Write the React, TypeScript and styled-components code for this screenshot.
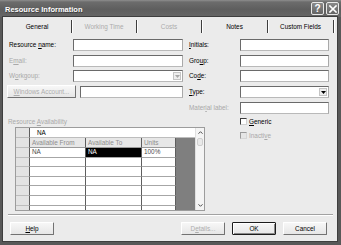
import React from "react";
import styled, { createGlobalStyle, css } from "styled-components";

const UI_FONT = `"Liberation Sans", Arial, sans-serif`;

const GlobalStyle = createGlobalStyle`
  html, body { margin: 0; padding: 0; background: #ffffff; }
  body { font-family: ${UI_FONT}; }
  * { box-sizing: border-box; }
`;

const Window = styled.div`
  width: 341px;
  height: 245px;
  background: #585858;
  display: flex;
  flex-direction: column;
  font-family: ${UI_FONT};
  font-size: 6.4px;
  color: #000;
  overflow: hidden;
`;

const TitleBar = styled.div`
  height: 17px;
  flex: none;
  display: flex;
  align-items: flex-start;
  gap: 2px;
  padding: 0 2px 0 5px;
  background: linear-gradient(#8e8e8e 0, #6c6c6c 2px, #5e5e5e 55%, #666666 100%);
`;

const Title = styled.div`
  flex: 1;
  padding-top: 5px;
  line-height: 9px;
  color: #fff;
  font-weight: bold;
  font-size: 7.5px;
  white-space: nowrap;
  text-shadow: 0.5px 0.5px 0 #3c3c3c;
`;

const TitleButton = styled.div`
  width: 13px;
  height: 13px;
  margin-top: 2px;
  border: 1px solid #e8e8e8;
  border-radius: 2px;
  background: linear-gradient(#8a8a8a, #646464);
  display: flex;
  align-items: center;
  justify-content: center;
  color: #fff;
  font-weight: bold;
  font-size: 10px;
  line-height: 11px;
`;

const Client = styled.div`
  flex: 1;
  margin: 0 4px 4px 3px;
  background: #ebebeb;
  display: flex;
  flex-direction: column;
  box-shadow: 0 0 0 1px #3e3e3e;
`;

const TabStrip = styled.div`
  height: 17px;
  flex: none;
  display: flex;
`;

const Tab = styled.div<{ $w: number; $disabled?: boolean }>`
  width: ${(p) => p.$w}px;
  height: 13px;
  margin-top: 3px;
  flex: none;
  display: flex;
  align-items: center;
  justify-content: center;
  border-right: 1px solid #3e3e3e;
  box-shadow: 1px 0 0 #ffffff;
  white-space: nowrap;
  color: ${(p) => (p.$disabled ? "#acacac" : "#000")};
`;

const TopSection = styled.div`
  display: flex;
  align-items: flex-start;
  margin-top: 5px;
  padding-left: 4px;
`;

const LeftFields = styled.div`
  width: 176px;
  display: grid;
  grid-template-columns: 66px 110px;
  grid-auto-rows: 12px;
  row-gap: 3.7px;
`;

const RightFields = styled.div`
  width: 140px;
  margin-left: 6px;
  display: grid;
  grid-template-columns: 51px 89px;
  grid-auto-rows: 12px;
  row-gap: 3.7px;
`;

const FieldLabel = styled.div<{ $disabled?: boolean; $indent?: number }>`
  line-height: 12px;
  white-space: nowrap;
  padding-left: ${(p) => p.$indent ?? 0}px;
  color: ${(p) => (p.$disabled ? "#a9a9a9" : "#000")};
`;

const Key = styled.span`
  text-decoration: underline;
  text-underline-offset: 1px;
`;

const TextBox = styled.div<{ $grow?: boolean }>`
  height: 12px;
  background: #fff;
  border: 1px solid;
  border-color: #6a6a6a #a9a9a9 #b9b9b9 #6a6a6a;
  display: flex;
  justify-content: flex-end;
  align-items: stretch;
  ${(p) => p.$grow && css`flex: 1;`}
`;

const DropButton = styled.div<{ $disabled?: boolean }>`
  width: 8px;
  margin: 1px;
  background: #eeeeee;
  border: 1px solid #c4c4c4;
  display: flex;
  align-items: center;
  justify-content: center;
  color: ${(p) => (p.$disabled ? "#a8a8a8" : "#000")};
`;

const AccountRow = styled.div`
  grid-column: 1 / -1;
  display: flex;
  align-items: flex-end;
  gap: 4px;
`;

const PushButton = styled.div<{ $w: number; $disabled?: boolean; $default?: boolean }>`
  width: ${(p) => p.$w}px;
  height: 13px;
  flex: none;
  display: flex;
  align-items: center;
  justify-content: center;
  white-space: nowrap;
  background: linear-gradient(#f7f7f7, #e6e6e6);
  border: 1px solid;
  border-color: #ffffff #727272 #727272 #ffffff;
  border-radius: 1px;
  color: ${(p) => (p.$disabled ? "#adadad" : "#000")};
  ${(p) =>
    p.$default &&
    css`
      border-color: #1c1c1c;
      box-shadow: inset 1px 1px 0 #ffffff, inset -1px -1px 0 #8a8a8a;
    `}
`;

const BottomSection = styled.div`
  display: flex;
  align-items: flex-start;
  margin-top: 3.2px;
  padding-left: 4px;
`;

const Availability = styled.div`
  width: 198px;
  display: flex;
  flex-direction: column;
`;

const GroupLabel = styled.div`
  height: 9px;
  line-height: 9px;
  padding-left: 1px;
  color: #a9a9a9;
  white-space: nowrap;
`;

const GridFrame = styled.div`
  width: 190px;
  height: 84px;
  margin: 1px 0 0 8px;
  border: 1px solid #9c9c9c;
  background: #fff;
  display: flex;
  overflow: hidden;
`;

const Sheet = styled.div`
  flex: 1;
  display: grid;
  grid-template-columns: 14px 56px 56px 34px 1fr;
  grid-template-rows: 10px 10px repeat(7, 9.6px);
  overflow: hidden;
`;

const RowHead = styled.div`
  background: #e3e3e3;
  border-right: 1px solid #5e5e5e;
  border-bottom: 1px solid #bdbdbd;
`;

const EditCell = styled.div`
  grid-column: 2 / -1;
  padding-left: 7px;
  line-height: 10px;
  border-bottom: 1px solid #bdbdbd;
  color: #000;
`;

const HeadCell = styled.div`
  background: #e7e7e7;
  border-right: 1px solid #5e5e5e;
  border-bottom: 1px solid #9a9a9a;
  padding-left: 2px;
  line-height: 9px;
  color: #8e8e8e;
  white-space: nowrap;
  overflow: hidden;
`;

const DataCell = styled.div<{ $selected?: boolean }>`
  border-right: 1px solid #5e5e5e;
  border-bottom: 1px solid #a6a6a6;
  padding-left: 2px;
  line-height: 8.6px;
  white-space: nowrap;
  overflow: hidden;
  color: #4a4a4a;
  ${(p) =>
    p.$selected &&
    css`
      background: #000;
      color: #fff;
    `}
`;

const DarkFill = styled.div`
  grid-column: 5;
  grid-row: 2 / span 8;
  background: #7f7f7f;
`;

const ScrollBar = styled.div`
  width: 9px;
  flex: none;
  display: flex;
  flex-direction: column;
  background: #f4f4f4;
  border-left: 1px solid #e0e0e0;
`;

const ScrollArrow = styled.div`
  height: 9px;
  flex: none;
  display: flex;
  align-items: center;
  justify-content: center;
  color: #4a4a4a;
`;

const ScrollThumb = styled.div`
  height: 8px;
  margin: 1px 1px 0;
  border: 1px solid #cfcfcf;
  border-radius: 2px;
  background: #e9e9e9;
`;

const ScrollSpacer = styled.div`
  flex: 1;
`;

const Checks = styled.div`
  margin-left: 35px;
  padding-top: 0.5px;
  display: flex;
  flex-direction: column;
  gap: 6.5px;
`;

const CheckRow = styled.div<{ $disabled?: boolean }>`
  height: 8px;
  display: flex;
  align-items: center;
  gap: 2px;
  white-space: nowrap;
  color: ${(p) => (p.$disabled ? "#a9a9a9" : "#000")};
`;

const CheckBox = styled.div<{ $disabled?: boolean }>`
  width: 7px;
  height: 7px;
  flex: none;
  border: 1px solid;
  border-color: ${(p) => (p.$disabled ? "#9a9a9a #d6d6d6 #d6d6d6 #9a9a9a" : "#3c3c3c #d0d0d0 #d0d0d0 #3c3c3c")};
  background: ${(p) => (p.$disabled ? "#e6e6e6" : "#fff")};
`;

const Separator = styled.div`
  height: 2px;
  margin: 3px 4px 0 5px;
  border-top: 1px solid #a2a2a2;
  border-bottom: 1px solid #ffffff;
`;

const ButtonRow = styled.div`
  display: flex;
  gap: 7px;
  margin-top: 6px;
  padding: 0 10px 0 7px;
`;

const Spacer = styled.div`
  flex: 1;
`;

const Arrow = ({ up }: { up?: boolean }) => (
  <svg width="5" height="3" viewBox="0 0 5 3">
    <polyline
      points={up ? "0.5,2.7 2.5,0.7 4.5,2.7" : "0.5,0.3 2.5,2.3 4.5,0.3"}
      fill="none"
      stroke="currentColor"
      strokeWidth="1"
    />
  </svg>
);

const DropTriangle = () => (
  <svg width="5" height="3" viewBox="0 0 5 3">
    <polygon points="0,0 5,0 2.5,3" fill="currentColor" />
  </svg>
);

const CloseGlyph = () => (
  <svg width="8" height="8" viewBox="0 0 8 8">
    <path d="M1 1 L7 7 M7 1 L1 7" stroke="#fff" strokeWidth="1.6" strokeLinecap="square" />
  </svg>
);

type Row = { from: string; to: string; units: string; selected?: boolean };

const rows: Row[] = [
  { from: "NA", to: "NA", units: "100%", selected: true },
  { from: "", to: "", units: "" },
  { from: "", to: "", units: "" },
  { from: "", to: "", units: "" },
  { from: "", to: "", units: "" },
  { from: "", to: "", units: "" },
  { from: "", to: "", units: "" },
];

const tabs = [
  { label: "General", w: 69 },
  { label: "Working Time", w: 65, disabled: true },
  { label: "Costs", w: 65, disabled: true },
  { label: "Notes", w: 66 },
  { label: "Custom Fields", w: 66 },
];

export default function App() {
  return (
    <>
      <GlobalStyle />
      <Window>
        <TitleBar>
          <Title>Resource Information</Title>
          <TitleButton>?</TitleButton>
          <TitleButton>
            <CloseGlyph />
          </TitleButton>
        </TitleBar>
        <Client>
          <TabStrip>
            {tabs.map((t) => (
              <Tab key={t.label} $w={t.w} $disabled={t.disabled}>
                {t.label}
              </Tab>
            ))}
          </TabStrip>

          <TopSection>
            <LeftFields>
              <FieldLabel $indent={2}>
                Resource <Key>n</Key>ame:
              </FieldLabel>
              <TextBox />
              <FieldLabel $indent={2} $disabled>
                E<Key>m</Key>ail:
              </FieldLabel>
              <TextBox />
              <FieldLabel $indent={2} $disabled>
                W<Key>o</Key>rkgoup:
              </FieldLabel>
              <TextBox>
                <DropButton $disabled>
                  <DropTriangle />
                </DropButton>
              </TextBox>
              <AccountRow>
                <PushButton $w={69} $disabled>
                  <Key>W</Key>indows Account...
                </PushButton>
                <TextBox $grow />
              </AccountRow>
            </LeftFields>

            <RightFields>
              <FieldLabel>
                <Key>I</Key>nitials:
              </FieldLabel>
              <TextBox />
              <FieldLabel>
                Gro<Key>u</Key>p:
              </FieldLabel>
              <TextBox />
              <FieldLabel>
                Co<Key>d</Key>e:
              </FieldLabel>
              <TextBox />
              <FieldLabel>
                <Key>T</Key>ype:
              </FieldLabel>
              <TextBox>
                <DropButton>
                  <DropTriangle />
                </DropButton>
              </TextBox>
              <FieldLabel $disabled>
                Mater<Key>i</Key>al label:
              </FieldLabel>
              <TextBox />
            </RightFields>
          </TopSection>

          <BottomSection>
            <Availability>
              <GroupLabel>
                Resource <Key>A</Key>vailability
              </GroupLabel>
              <GridFrame>
                <Sheet>
                  <RowHead />
                  <EditCell>NA</EditCell>
                  <RowHead />
                  <HeadCell>Available From</HeadCell>
                  <HeadCell>Available To</HeadCell>
                  <HeadCell>Units</HeadCell>
                  <DarkFill />
                  {rows.map((r, i) => (
                    <React.Fragment key={i}>
                      <RowHead />
                      <DataCell>{r.from}</DataCell>
                      <DataCell $selected={r.selected}>{r.to}</DataCell>
                      <DataCell>{r.units}</DataCell>
                    </React.Fragment>
                  ))}
                </Sheet>
                <ScrollBar>
                  <ScrollArrow>
                    <Arrow up />
                  </ScrollArrow>
                  <ScrollThumb />
                  <ScrollSpacer />
                  <ScrollArrow>
                    <Arrow />
                  </ScrollArrow>
                </ScrollBar>
              </GridFrame>
            </Availability>
            <Checks>
              <CheckRow>
                <CheckBox />
                <span>
                  <Key>G</Key>eneric
                </span>
              </CheckRow>
              <CheckRow $disabled>
                <CheckBox $disabled />
                <span>
                  Inacti<Key>v</Key>e
                </span>
              </CheckRow>
            </Checks>
          </BottomSection>

          <Separator />

          <ButtonRow>
            <PushButton $w={44}>
              <Key>H</Key>elp
            </PushButton>
            <Spacer />
            <PushButton $w={44} $disabled>
              D<Key>e</Key>tails...
            </PushButton>
            <PushButton $w={44} $default>
              OK
            </PushButton>
            <PushButton $w={44}>Cancel</PushButton>
          </ButtonRow>
        </Client>
      </Window>
    </>
  );
}
